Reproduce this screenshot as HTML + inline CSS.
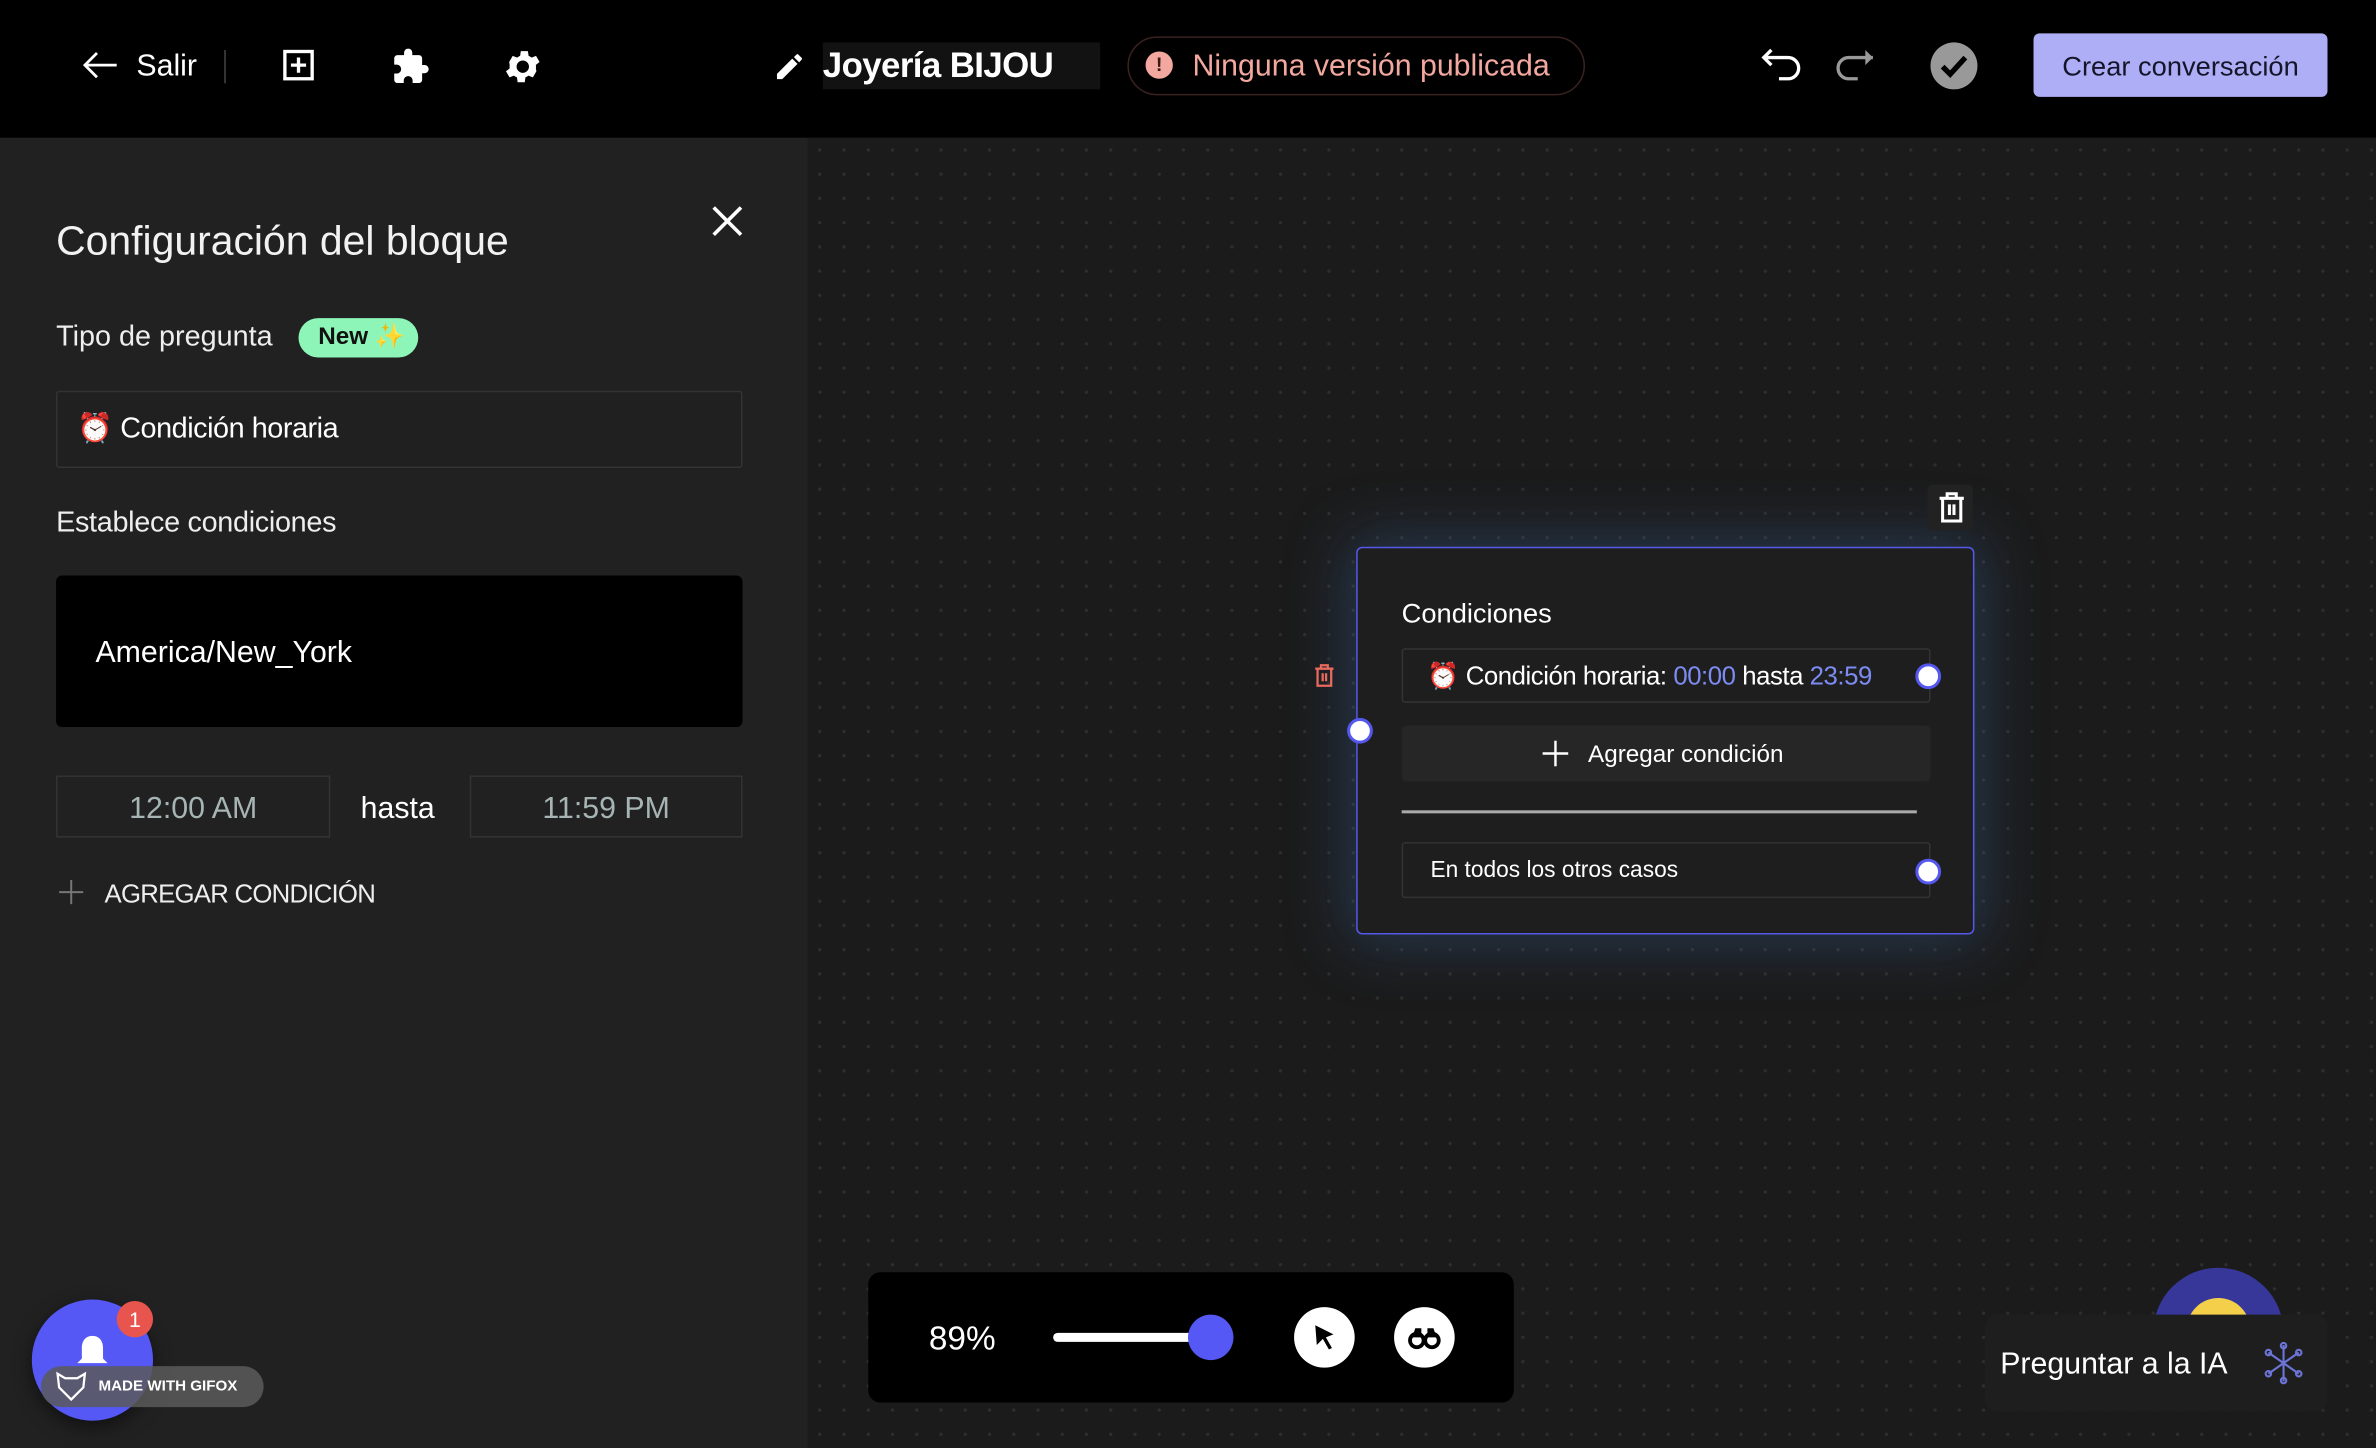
<!DOCTYPE html>
<html><head><meta charset="utf-8"><style>
html,body{margin:0;padding:0;width:2376px;height:1448px;overflow:hidden;background:#1a1a1a}
#w{position:absolute;left:0;top:0;width:1568px;height:956px;transform:scale(1.5153,1.5146);transform-origin:0 0;font-family:"Liberation Sans","Noto Sans CJK JP",sans-serif;color:#eee}
.a{position:absolute}
#top{left:0;top:0;width:1568px;height:91px;background:#000;border-bottom:1px solid #2a2a2a}
#left{left:0;top:91px;width:533px;height:865px;background:#212121}
#canvas{left:533px;top:91px;width:1035px;height:865px;background-color:#1b1b1b;background-image:radial-gradient(#2e2e2e 1px,transparent 1.2px);background-size:16px 16px}
.t{white-space:nowrap}
.h{width:17px;height:17px;border-radius:50%;background:#fff;border:2.5px solid #5558ee;box-sizing:border-box;position:absolute}
</style></head><body><div id="w">
<div id="top" class="a"></div>
<div id="left" class="a"></div>
<div id="canvas" class="a"></div>

<!-- top bar -->
<svg class="a" style="left:53px;top:33px" width="26" height="20" viewBox="0 0 26 20"><path d="M24 10H3M11 2L3 10l8 8" stroke="#fff" stroke-width="1.8" fill="none"/></svg>
<div class="a t" style="left:90px;top:33px;font-size:20px;color:#fff">Salir</div>
<div class="a" style="left:148px;top:33px;width:1px;height:22px;background:#444"></div>
<svg class="a" style="left:186px;top:32px" width="22" height="22" viewBox="0 0 22 22"><rect x="2" y="2" width="18" height="18" fill="none" stroke="#fff" stroke-width="2.2"/><path d="M11 6v10M6 11h10" stroke="#fff" stroke-width="2.2"/></svg>
<svg class="a" style="left:258px;top:31px" width="26" height="26" viewBox="0 0 24 24"><path fill="#fff" d="M20.5 11H19V7c0-1.1-.9-2-2-2h-4V3.5a2.5 2.5 0 0 0-5 0V5H4c-1.1 0-2 .9-2 2v3.8h1.5c1.5 0 2.7 1.2 2.7 2.7S5 16.2 3.5 16.2H2V20c0 1.1.9 2 2 2h3.8v-1.5c0-1.5 1.2-2.7 2.7-2.7s2.7 1.2 2.7 2.7V22H17c1.1 0 2-.9 2-2v-4h1.5a2.5 2.5 0 0 0 0-5z"/></svg>
<svg class="a" style="left:331px;top:30px" width="28" height="28" viewBox="0 0 24 24"><path fill="#fff" d="M19.4 13a7.5 7.5 0 0 0 0-2l2.1-1.6-2-3.5-2.5 1a7 7 0 0 0-1.7-1l-.4-2.7h-4l-.4 2.7a7 7 0 0 0-1.7 1l-2.5-1-2 3.5L4.6 11a7.5 7.5 0 0 0 0 2l-2.1 1.6 2 3.5 2.5-1a7 7 0 0 0 1.7 1l.4 2.7h4l.4-2.7a7 7 0 0 0 1.7-1l2.5 1 2-3.5zM12 15.5a3.5 3.5 0 1 1 0-7 3.5 3.5 0 0 1 0 7z"/></svg>
<svg class="a" style="left:510px;top:33px" width="22" height="22" viewBox="0 0 24 24"><path fill="#fff" d="M3 17.2V21h3.8L17.8 10l-3.8-3.8zM20.7 7c.4-.4.4-1 0-1.4l-2.3-2.3c-.4-.4-1-.4-1.4 0l-1.8 1.8 3.8 3.8z"/></svg>
<div class="a" style="left:543px;top:28px;width:183px;height:31px;background:#121212"></div>
<div class="a t" style="left:543px;top:30px;font-size:23px;font-weight:bold;color:#fff;letter-spacing:-0.4px">Joyería BIJOU</div>
<div class="a" style="left:744px;top:24px;width:302px;height:39px;border:1px solid #3a2220;border-radius:20px;box-sizing:border-box"></div>
<div class="a" style="left:756px;top:34px;width:18px;height:18px;border-radius:50%;background:#f2a89e;color:#3a1a16;font-size:13px;font-weight:bold;text-align:center;line-height:18px">!</div>
<div class="a t" style="left:787px;top:33px;font-size:20px;color:#f2a89e">Ninguna versión publicada</div>
<svg class="a" style="left:1160px;top:30px" width="32" height="26" viewBox="0 0 32 26"><path d="M4 8h16a7 7 0 0 1 0 14h-6M9 3L4 8l5 5" stroke="#fff" stroke-width="2.2" fill="none"/></svg>
<svg class="a" style="left:1208px;top:30px" width="32" height="26" viewBox="0 0 32 26"><path d="M28 8H12a7 7 0 0 0 0 14h6" stroke="#999" stroke-width="2.2" fill="none"/><path d="M23 3l5 5-5 5z" fill="#999"/></svg>
<div class="a" style="left:1274px;top:28px;width:31px;height:31px;border-radius:50%;background:#999"></div>
<svg class="a" style="left:1274px;top:28px" width="31" height="31" viewBox="0 0 31 31"><path d="M8 16l5 5 10-11" stroke="#000" stroke-width="3.5" fill="none"/></svg>
<div class="a" style="left:1342px;top:22px;width:194px;height:42px;background:#aeaef6;border-radius:4px"></div>
<div class="a t" style="left:1342px;top:34px;width:194px;text-align:center;font-size:18px;color:#15152a">Crear conversación</div>

<!-- left panel -->
<div class="a t" style="left:37px;top:144px;font-size:27px;color:#f2f2f2">Configuración del bloque</div>
<svg class="a" style="left:469px;top:135px" width="22" height="22" viewBox="0 0 22 22"><path d="M2 2l18 18M20 2L2 20" stroke="#fff" stroke-width="2.4"/></svg>
<div class="a t" style="left:37px;top:212px;font-size:19px;color:#eee">Tipo de pregunta</div>
<div class="a t" style="left:197px;top:210px;width:79px;height:26px;border-radius:13px;background:#8ef5b8;color:#111;font-size:16px;font-weight:bold;line-height:26px;padding-left:13px;box-sizing:border-box">New <span style="color:#e8c84a;font-weight:normal">✨</span></div>
<div class="a" style="left:37px;top:258px;width:453px;height:51px;border:1px solid #333;background:#202020;border-radius:2px;box-sizing:border-box"></div>
<div class="a t" style="left:51px;top:271px;font-size:19px;color:#fff;letter-spacing:-0.3px">⏰ Condición horaria</div>
<div class="a t" style="left:37px;top:335px;font-size:19px;color:#eee;letter-spacing:-0.2px">Establece condiciones</div>
<div class="a" style="left:37px;top:380px;width:453px;height:100px;background:#000;border-radius:4px"></div>
<div class="a t" style="left:63px;top:420px;font-size:20px;color:#fff">America/New_York</div>
<div class="a" style="left:37px;top:512px;width:181px;height:41px;border:1px solid #333;box-sizing:border-box"></div>
<div class="a t" style="left:37px;top:523px;width:181px;text-align:center;font-size:20px;color:#a7b4b4">12:00 AM</div>
<div class="a t" style="left:238px;top:523px;font-size:20px;color:#fff">hasta</div>
<div class="a" style="left:310px;top:512px;width:180px;height:41px;border:1px solid #333;box-sizing:border-box"></div>
<div class="a t" style="left:310px;top:523px;width:180px;text-align:center;font-size:20px;color:#a7b4b4">11:59 PM</div>
<svg class="a" style="left:39px;top:581px" width="16" height="16" viewBox="0 0 16 16"><path d="M8 0v16M0 8h16" stroke="#777" stroke-width="1.3"/></svg>
<div class="a t" style="left:69px;top:581px;font-size:17px;color:#eee;letter-spacing:-0.5px">AGREGAR CONDICIÓN</div>

<!-- node -->
<div class="a" style="left:895px;top:361px;width:408px;height:256px;border:1.5px solid #5558e8;background:#1e1e1e;border-radius:4px;box-sizing:border-box;box-shadow:0 0 40px 6px rgba(60,110,170,.35)"></div>
<div class="a" style="left:1272px;top:320px;width:30px;height:30px;background:#222;border-radius:3px"></div>
<svg class="a" style="left:1278px;top:323px" width="20" height="24" viewBox="0 0 20 24"><path d="M2 6h16M7 6V3h6v3M4 6v15h12V6M8.5 10v7M11.5 10v7" stroke="#fff" stroke-width="2" fill="none"/></svg>
<svg class="a" style="left:866px;top:437px" width="16" height="18" viewBox="0 0 20 24"><path d="M2 6h16M7 6V3h6v3M4 6v15h12V6M8.5 10v7M11.5 10v7" stroke="#e86a5e" stroke-width="2" fill="none"/></svg>
<div class="a t" style="left:925px;top:395px;font-size:18px;color:#fff">Condiciones</div>
<div class="a" style="left:925px;top:428px;width:349px;height:36px;border:1px solid #333;box-sizing:border-box;border-radius:2px"></div>
<div class="a t" style="left:942px;top:437px;font-size:17px;color:#fff;letter-spacing:-0.3px">⏰ Condición horaria: <span style="color:#7c8cf2">00:00</span> hasta <span style="color:#7c8cf2">23:59</span></div>
<div class="a" style="left:925px;top:479px;width:349px;height:37px;background:#262626;border-radius:3px"></div>
<svg class="a" style="left:1018px;top:489px" width="17" height="17" viewBox="0 0 17 17"><path d="M8.5 0v17M0 8.5h17" stroke="#fff" stroke-width="1.6"/></svg>
<div class="a t" style="left:1048px;top:490px;font-size:16px;color:#fff">Agregar condición</div>
<div class="a" style="left:925px;top:535px;width:340px;height:2px;background:#aaa"></div>
<div class="a" style="left:925px;top:556px;width:349px;height:37px;border:1px solid #333;box-sizing:border-box;border-radius:2px"></div>
<div class="a t" style="left:944px;top:566px;font-size:15px;color:#fff">En todos los otros casos</div>
<div class="h" style="left:1264px;top:438px"></div>
<div class="h" style="left:889px;top:474px"></div>
<div class="h" style="left:1264px;top:567px"></div>

<!-- bottom toolbar -->
<div class="a" style="left:573px;top:840px;width:426px;height:86px;background:#000;border-radius:8px"></div>
<div class="a t" style="left:613px;top:871px;font-size:22px;color:#fff">89%</div>
<div class="a" style="left:695px;top:880px;width:118px;height:6px;background:#fff;border-radius:3px"></div>
<div class="a" style="left:784px;top:868px;width:30px;height:30px;border-radius:50%;background:#5558f5"></div>
<div class="a" style="left:854px;top:863px;width:40px;height:40px;border-radius:50%;background:#fff"></div>
<svg class="a" style="left:865px;top:873px" width="18" height="20" viewBox="0 0 18 20"><path d="M3 2l12 6-5 2 4 7-2 1-4-7-4 4z" fill="#000"/></svg>
<div class="a" style="left:920px;top:863px;width:40px;height:40px;border-radius:50%;background:#fff"></div>
<svg class="a" style="left:929px;top:874px" width="22" height="18" viewBox="0 0 22 18"><circle cx="6" cy="11" r="4.5" fill="none" stroke="#000" stroke-width="2.5"/><circle cx="16" cy="11" r="4.5" fill="none" stroke="#000" stroke-width="2.5"/><path d="M3 9l2-6h4v5h4V3h4l2 6" fill="#000"/></svg>

<!-- AI -->
<div class="a" style="left:1421px;top:837px;width:86px;height:86px;border-radius:50%;background:#37379a;overflow:hidden"><div style="position:absolute;left:22px;top:20px;width:42px;height:42px;border-radius:50%;background:#f3cf4a"></div></div>
<div class="a" style="left:1310px;top:868px;width:226px;height:64px;background:#1e1e1e;border-radius:8px"></div>
<div class="a t" style="left:1320px;top:890px;font-size:20px;color:#fff">Preguntar a la IA</div>
<svg class="a" style="left:1493px;top:886px" width="28" height="28" viewBox="0 0 28 28" stroke="#6c74d8" stroke-width="1.4" fill="none"><path d="M14 2v24M4 7l20 14M24 7L4 21"/><circle cx="14" cy="2.5" r="1.8"/><circle cx="14" cy="25.5" r="1.8"/><circle cx="4" cy="7" r="1.8"/><circle cx="24" cy="21" r="1.8"/><circle cx="24" cy="7" r="1.8"/><circle cx="4" cy="21" r="1.8"/></svg>

<!-- bottom left -->
<div class="a" style="left:21px;top:858px;width:80px;height:80px;border-radius:50%;background:#5558f5;box-shadow:0 4px 12px rgba(0,0,0,.5)"></div>
<svg class="a" style="left:49px;top:880px" width="24" height="26" viewBox="0 0 24 26"><path d="M12 2c-5 0-7 4-7 8v7l-3 3h20l-3-3v-7c0-4-2-8-7-8z" fill="#fff"/></svg>
<div class="a" style="left:77px;top:859px;width:24px;height:24px;border-radius:50%;background:#e8554e;color:#fff;font-size:14px;text-align:center;line-height:24px">1</div>
<div class="a t" style="left:27px;top:902px;width:147px;height:27px;border-radius:14px;background:rgba(90,90,90,.85);font-size:10px;font-weight:bold;color:#fff;line-height:27px;padding-left:38px;box-sizing:border-box">MADE WITH GIFOX</div>
<svg class="a" style="left:36px;top:905px" width="22" height="20" viewBox="0 0 22 20"><path d="M2 2l5 3h8l5-3-1 9-8 8-8-8z" fill="none" stroke="#fff" stroke-width="1.5"/></svg>
</div></body></html>
